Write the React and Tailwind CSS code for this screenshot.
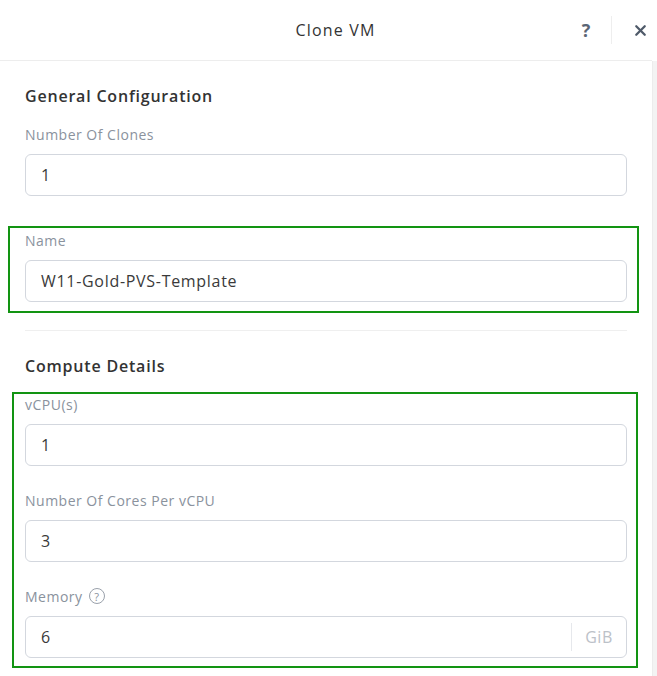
import { X } from 'lucide-react';

const font = { fontFamily: '"Open Sans", "Liberation Sans", sans-serif' };

function Field({ label, value, suffix, help, className = '' }) {
  return (
    <div className={className}>
      <div className="flex items-center gap-[6px] h-[20px] text-[14px] tracking-[0.5px] text-[#8a929d]">
        <span>{label}</span>
        {help && (
          <span className="inline-flex items-center justify-center w-[16px] h-[16px] rounded-full border border-[#9aa1ab] text-[11px] leading-none tracking-normal text-[#8a929d]">
            ?
          </span>
        )}
      </div>
      <div className="mt-[10px] h-[42px] flex items-center rounded-[6px] border border-[#d3d7de] bg-white">
        <span className="flex-1 pl-[15px] text-[16px] tracking-[0.7px] text-[#3a3a3a]">{value}</span>
        {suffix && (
          <>
            <span className="w-px h-[28px] bg-[#e6e8ec]" />
            <span className="w-[54px] text-center text-[16px] tracking-[0.5px] text-[#bcc1c8]">{suffix}</span>
          </>
        )}
      </div>
    </div>
  );
}

export default function App() {
  return (
    <div className="w-[657px] h-[676px] bg-white overflow-hidden flex flex-col" style={font}>
      <div className="w-[652px] h-[61px] shrink-0 flex items-center border-b border-[#ededed]">
        <div className="flex-1 pl-[100px] text-center text-[16px] tracking-[1.2px] text-[#333]">Clone VM</div>
        <div className="flex items-center h-full">
          <span className="w-[30px] text-center text-[18px] font-bold text-[#5b6675]">?</span>
          <span className="ml-[10px] w-px h-[28px] bg-[#eeeeee]" />
          <span className="pl-[20px] pr-[3px] flex justify-center">
            <X size={17} strokeWidth={3.2} color="#4f5a69" />
          </span>
        </div>
      </div>

      <div className="flex flex-1">
        <div className="w-[652px] px-[25px]">
          <div className="w-[602px] pt-[23px]">
            <h2 className="h-[24px] text-[16px] font-semibold tracking-[0.8px] text-[#333] leading-[24px]">General Configuration</h2>
            <Field label="Number Of Clones" value="1" className="mt-[16px]" />

            <div className="mt-[30px] -ml-[17px] -mr-[12px] border-2 border-[#129412] pl-[15px] pr-[10px] pt-[2px] pb-[9px]">
              <Field label="Name" value="W11-Gold-PVS-Template" />
            </div>

            <div className="mt-[17px] h-px bg-[#efefef]" />

            <h2 className="mt-[23px] h-[24px] text-[16px] font-semibold tracking-[0.8px] text-[#333] leading-[24px]">Compute Details</h2>

            <div className="mt-[14px] -ml-[13px] -mr-[11px] border-2 border-[#129412] pl-[11px] pr-[9px] pt-[0px] pb-[8px]">
              <Field label="vCPU(s)" value="1" />
              <Field label="Number Of Cores Per vCPU" value="3" className="mt-[24px]" />
              <Field label="Memory" value="6" help suffix="GiB" className="mt-[24px]" />
            </div>
          </div>
        </div>
        <div className="w-[5px] bg-[#f3f3f3] border-l border-[#ececec]" />
      </div>
    </div>
  );
}
